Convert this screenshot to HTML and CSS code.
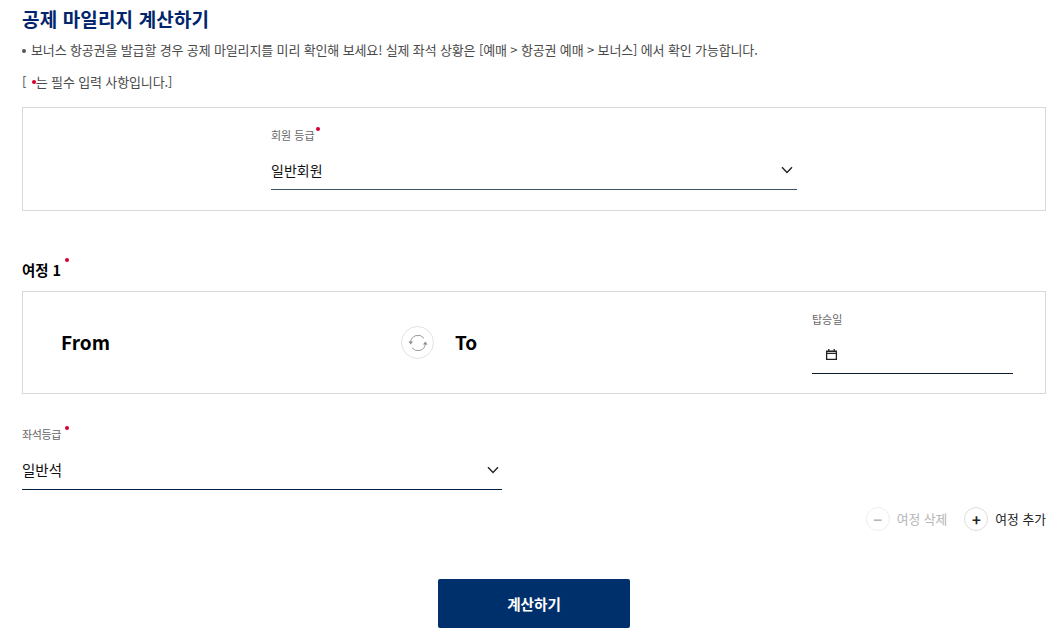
FILE: index.html
```html
<!DOCTYPE html>
<html lang="ko">
<head>
    <meta charset="UTF-8">
    <title>공제 마일리지 계산하기</title>
    <link rel="stylesheet" href="styles.css">
</head>
<body>
    <h1 class="page-title">공제 마일리지 계산하기</h1>
    <p class="notice">보너스 항공권을 발급할 경우 공제 마일리지를 미리 확인해 보세요! 실제 좌석 상황은 [예매 &gt; 항공권 예매 &gt; 보너스] 에서 확인 가능합니다.</p>
    <p class="required-note">[ <span class="dot-inline"></span>는 필수 입력 사항입니다.]</p>

    <!-- Member grade -->
    <div class="box member-box">
        <div class="field member-field">
            <span class="field-label">회원 등급<i class="req"></i></span>
            <div class="select-row member-select">
                <span>일반회원</span>
                <svg class="chevron" viewBox="0 0 12 8"><path d="M1 1.2 6 6.4 11 1.2"/></svg>
            </div>
        </div>
    </div>

    <h2 class="trip-title">여정 1<i class="req"></i></h2>

    <div class="box trip-box">
        <div class="trip-from">From</div>
        <button class="swap" type="button">
            <svg viewBox="0 0 20 20">
                <path d="M2.6 9.2A7.5 7.5 0 0 1 16 5.2"/>
                <path d="M17.4 10.8A7.5 7.5 0 0 1 4 14.8"/>
                <path class="arrow" d="M.4 8.6 5 8.6 2.7 11.4Z"/>
                <path class="arrow" d="M15 11.4 19.6 11.4 17.3 8.6Z"/>
            </svg>
        </button>
        <div class="trip-to">To</div>
        <div class="date-field">
            <span class="field-label">탑승일</span>
            <div class="date-input">
                <svg class="calendar" viewBox="0 0 12 12">
                    <path d="M1.5 3h9v7.5h-9zM1.5 5h9M3.5 1v2M8.5 1v2"/>
                </svg>
            </div>
        </div>
    </div>

    <!-- Seat class -->
    <div class="field seat-field">
        <span class="field-label seat-label">좌석등급<i class="req"></i></span>
        <div class="select-row seat-select">
            <span>일반석</span>
            <svg class="chevron" viewBox="0 0 12 8"><path d="M1 1.2 6 6.4 11 1.2"/></svg>
        </div>
    </div>

    <div class="trip-actions">
        <button class="trip-btn disabled" type="button"><span class="round">&minus;</span>여정 삭제</button>
        <button class="trip-btn" type="button"><span class="round">+</span>여정 추가</button>
    </div>

    <div class="submit-wrap">
        <button class="submit" type="button">계산하기</button>
    </div>
</body>
</html>
```

FILE: styles.css
```css
* {
    margin: 0;
    padding: 0;
    box-sizing: border-box;
    font-family: "Noto Sans CJK KR", "Noto Sans", sans-serif;
}

body {
    color: #000;
    background: #fff;
    padding: 5px 11px 10px 22px;
    overflow: hidden;
}

.page-title {
    font-size: 19px;
    line-height: 28px;
    font-weight: 700;
    letter-spacing: 0.15px;
    color: #00256c;
}

.notice {
    position: relative;
    margin-top: 7px;
    padding-left: 9px;
    font-size: 13px;
    line-height: 20px;
    letter-spacing: -0.14px;
    color: #4a4a4a;
}

.notice::before {
    content: "";
    position: absolute;
    left: 0;
    top: 9px;
    width: 4px;
    height: 4px;
    border-radius: 50%;
    background: #555;
}

.required-note {
    margin-top: 12px;
    font-size: 13px;
    line-height: 20px;
    letter-spacing: -0.14px;
    color: #4a4a4a;
}

.dot-inline {
    display: inline-block;
    width: 4px;
    height: 4px;
    margin-left: 2px;
    border-radius: 50%;
    background: #d5002f;
    vertical-align: 3px;
}

.req {
    display: inline-block;
    width: 4px;
    height: 4px;
    margin-left: 1px;
    border-radius: 50%;
    background: #d5002f;
    vertical-align: 9px;
}

.box {
    border: 1px solid #d9d9d9;
}

.member-box {
    height: 104px;
    margin-top: 15px;
    padding-top: 18px;
}

.field-label {
    display: block;
    height: 18px;
    font-size: 11px;
    line-height: 18px;
    color: #666;
}

.member-field {
    width: 526px;
    margin: 0 auto;
}

.select-row {
    display: flex;
    justify-content: space-between;
    align-items: center;
    font-size: 14px;
    color: #111;
}

.member-select {
    height: 39px;
    margin-top: 7px;
    padding-right: 4px;
    border-bottom: 1px solid #3d5166;
}

.chevron {
    width: 12px;
    height: 8px;
    fill: none;
    stroke: #222;
    stroke-width: 1.4;
}

.trip-title {
    height: 22px;
    margin-top: 47px;
    font-size: 14.4px;
    line-height: 20px;
    font-weight: 700;
}

.trip-title .req {
    margin-left: 4px;
    vertical-align: 14px;
}

.trip-box {
    display: flex;
    align-items: center;
    height: 103px;
    margin-top: 11px;
    padding: 0 32px 0 38px;
}

.trip-from,
.trip-to {
    margin-bottom: 2px;
    font-size: 19px;
    font-weight: 700;
    line-height: 28px;
}

.trip-from {
    width: 340px;
}

.swap {
    flex: none;
    display: flex;
    align-items: center;
    justify-content: center;
    width: 33px;
    height: 33px;
    margin-right: 21px;
    border: 1px solid #e2e2e2;
    border-radius: 50%;
    background: #fff;
}

.swap svg {
    width: 20px;
    height: 20px;
    fill: none;
    stroke: #9a9a9a;
    stroke-width: 1;
}

.swap .arrow {
    fill: #8c8c8c;
    stroke: none;
}

.trip-to {
    flex: 1;
}

.date-field {
    width: 201px;
    margin-bottom: 2px;
}

.date-input {
    display: flex;
    align-items: center;
    height: 38px;
    margin-top: 8px;
    padding-left: 13px;
    border-bottom: 1px solid #0c1c2c;
}

.calendar {
    width: 13px;
    height: 13px;
    fill: none;
    stroke: #222;
    stroke-width: 1.2;
}

.seat-field {
    width: 480px;
    margin-top: 31px;
}

.seat-label {
    letter-spacing: -0.4px;
}

.seat-label .req {
    margin-left: 4px;
}

.seat-select {
    height: 38px;
    margin-top: 9px;
    padding-right: 3px;
    padding-bottom: 2px;
    font-size: 14.5px;
    border-bottom: 1px solid #00204a;
}

.trip-actions {
    display: flex;
    justify-content: flex-end;
    gap: 17px;
    margin-top: 17px;
}

.trip-btn {
    display: flex;
    align-items: center;
    gap: 7px;
    border: none;
    background: none;
    font-size: 12.8px;
    line-height: 24px;
    color: #222;
}

.trip-btn.disabled {
    color: #b5b5b5;
}

.round {
    display: flex;
    align-items: center;
    justify-content: center;
    width: 24px;
    height: 24px;
    border: 1px solid #ddd;
    border-radius: 50%;
    font-size: 15px;
    font-weight: 700;
    line-height: 1;
}

.trip-btn.disabled .round {
    border-color: #eee;
}

.submit-wrap {
    display: flex;
    justify-content: center;
    margin-top: 48px;
}

.submit {
    width: 192px;
    height: 49px;
    border: none;
    border-radius: 2px;
    background: #00306b;
    color: #fff;
    font-size: 14.6px;
    font-weight: 700;
}
```
